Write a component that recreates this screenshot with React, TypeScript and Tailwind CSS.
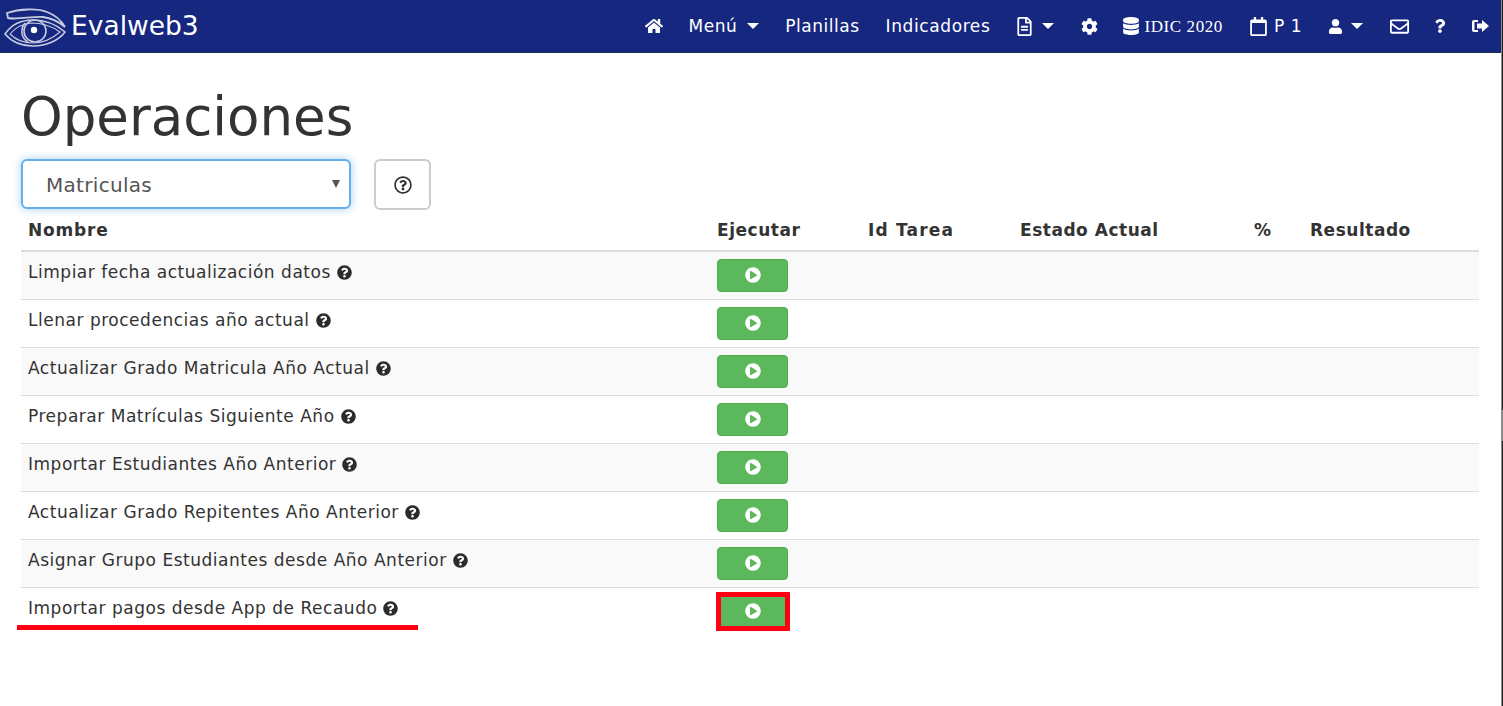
import { FaHome, FaCog, FaDatabase, FaUser, FaQuestion, FaQuestionCircle, FaRegQuestionCircle, FaPlayCircle, FaRegFileAlt, FaRegCalendar, FaRegEnvelope } from 'react-icons/fa';

const tareas = [
  'Limpiar fecha actualización datos',
  'Llenar procedencias año actual',
  'Actualizar Grado Matricula Año Actual',
  'Preparar Matrículas Siguiente Año',
  'Importar Estudiantes Año Anterior',
  'Actualizar Grado Repitentes Año Anterior',
  'Asignar Grupo Estudiantes desde Año Anterior',
  'Importar pagos desde App de Recaudo',
];

const Caret = () => (
  <span className="inline-block w-0 h-0 border-x-[6px] border-x-transparent border-t-[6px] border-t-white" />
);

const Logo = () => (
  <svg width="64" height="42" viewBox="0 0 64 42" fill="none" stroke="#c6cbe0" strokeWidth="1.6" className="shrink-0">
    <path d="M4 8 C 16 4, 34 3, 44 7 C 52 10, 58 15, 62 22 C 55 16, 48 13, 40 12 C 30 11, 14 15, 5 13 Z" strokeWidth="1.8" />
    <path d="M2 29 C 8 20, 18 15, 30 15 C 44 15, 54 20, 62 27 C 56 35, 44 41, 30 41 C 18 41, 8 36, 2 29 Z" />
    <path d="M7 29 C 12 23, 18 19, 28 18 C 42 18, 50 22, 57 27 C 50 33, 42 38, 30 38 C 20 38, 12 34, 7 29 Z" strokeWidth="1.1" />
    <circle cx="32" cy="26" r="11" />
    <path d="M22 18 C 17 24, 18 33, 25 37" />
    <circle cx="31" cy="25" r="3.2" fill="#fff" stroke="none" />
  </svg>
);

const SignOut = () => (
  <svg width="17" height="14" viewBox="0 0 17 14" fill="#fff">
    <path d="M0 3 Q0 1 2 1 H6 V3 H2.5 V11 H6 V13 H2 Q0 13 0 11 Z" />
    <path d="M10 1 L17 7 L10 13 V9.5 H5 V4.5 H10 Z" />
  </svg>
);

const App = () => {
  return (
    <div className="relative min-h-[706px] bg-white text-[#333] overflow-hidden font-['DejaVu_Sans',sans-serif]">
      <nav className="h-[53px] bg-[#162780] border-b border-[#1f2d4d] flex items-center justify-between pl-[3px] pr-[14px] text-white">
        <div className="flex items-center gap-[4px]">
          <Logo />
          <span className="text-[26.5px] leading-none">Evalweb3</span>
        </div>
        <div className="flex items-center text-[17px] tracking-[0.52px]">
          <FaHome className="text-[18px] mr-[26px]" />
          <span className="mr-[10px] pt-[2px]">Menú</span>
          <span className="mr-[26px] flex"><Caret /></span>
          <span className="mr-[26px] pt-[2px]">Planillas</span>
          <span className="mr-[25px] pt-[2px] tracking-[0.6px]">Indicadores</span>
          <FaRegFileAlt className="text-[19px] mr-[8px]" />
          <span className="mr-[27px] flex"><Caret /></span>
          <FaCog className="text-[17px] mr-[24px]" />
          <FaDatabase className="text-[18px] mr-[4px]" />
          <span className="text-[17px] tracking-[0.6px] font-['Liberation_Serif',serif] mr-[26px] pt-[2px]">IDIC 2020</span>
          <FaRegCalendar className="text-[19px] mr-[6px]" />
          <span className="mr-[26px] pt-[2px]">P 1</span>
          <FaUser className="text-[15px] mr-[8px]" />
          <span className="mr-[27px] flex"><Caret /></span>
          <FaRegEnvelope className="text-[19px] mr-[24px]" />
          <FaQuestion className="text-[14px] mr-[25px]" />
          <SignOut />
        </div>
      </nav>

      <main className="px-[21px]">
        <h1 className="text-[53px] leading-[61px] font-normal mt-[33px] mb-[12px]">Operaciones</h1>

        <div className="flex items-start gap-[23px] mb-[1px]">
          <div className="relative w-[330px] h-[50px] bg-white border-2 border-[#66afe9] rounded-[6px] shadow-[0_0_8px_rgba(102,175,233,0.6)] flex items-center pl-[23px] pt-[2px] text-[20px] tracking-[0.3px] text-[#555]">
            Matriculas
            <span className="absolute right-[9px] top-[19px] w-0 h-0 border-x-[4px] border-x-transparent border-t-[8px] border-t-[#555]" />
          </div>
          <div className="w-[57px] h-[51px] border-2 border-[#ccc] rounded-[6px] flex items-center justify-center">
            <FaRegQuestionCircle className="text-[18px]" />
          </div>
        </div>

        <table className="w-[1458px] table-fixed border-collapse text-[17px] tracking-[0.52px]">
          <colgroup>
            <col className="w-[689px]" />
            <col className="w-[151px]" />
            <col className="w-[152px]" />
            <col className="w-[234px]" />
            <col className="w-[56px]" />
            <col />
          </colgroup>
          <thead>
            <tr className="h-[40px] border-b-2 border-[#ddd] text-left font-bold">
              <th className="px-[7px] tracking-[0.8px]">Nombre</th>
              <th className="px-[7px]">Ejecutar</th>
              <th className="px-[7px] tracking-[1.2px]">Id Tarea</th>
              <th className="px-[7px]">Estado Actual</th>
              <th className="px-[7px]">%</th>
              <th className="px-[7px]">Resultado</th>
            </tr>
          </thead>
          <tbody>
            {tareas.map((nombre, i) => (
              <tr key={nombre} className={`h-[48px] border-b border-[#ddd] last:border-b-0 ${i % 2 === 0 ? 'bg-[#f9f9f9]' : 'bg-white'}`}>
                <td className="px-[7px] pb-[5px]">
                  <span className="inline-flex items-center gap-[6px]">
                    {nombre}
                    <FaQuestionCircle className="text-[15px] text-[#2b2b2b]" />
                  </span>
                </td>
                <td className="px-[7px]">
                  <button className="w-[71px] h-[33px] bg-[#5cb85c] border border-[#4cae4c] rounded-[4px] flex items-center justify-center">
                    <FaPlayCircle className="text-[16px] text-white" />
                  </button>
                </td>
                <td colSpan={4} />
              </tr>
            ))}
          </tbody>
        </table>
      </main>

      {/* marcas rojas sobre la captura */}
      <div className="absolute left-[17px] top-[625px] w-[401px] h-[5px] bg-[#ff0013]" />
      <div className="absolute left-[716px] top-[592px] w-[74px] h-[39px] border-[5px] border-[#ff0013]" />

      {/* borde de la ventana a la derecha */}
      <div className="absolute right-0 inset-y-0 w-[2px] border-l border-[#8b8b8b] bg-[#222]" />
      <div className="absolute right-0 top-[410px] w-[2px] h-[31px] bg-[#8b8b8b]" />
    </div>
  );
};

export default App;
